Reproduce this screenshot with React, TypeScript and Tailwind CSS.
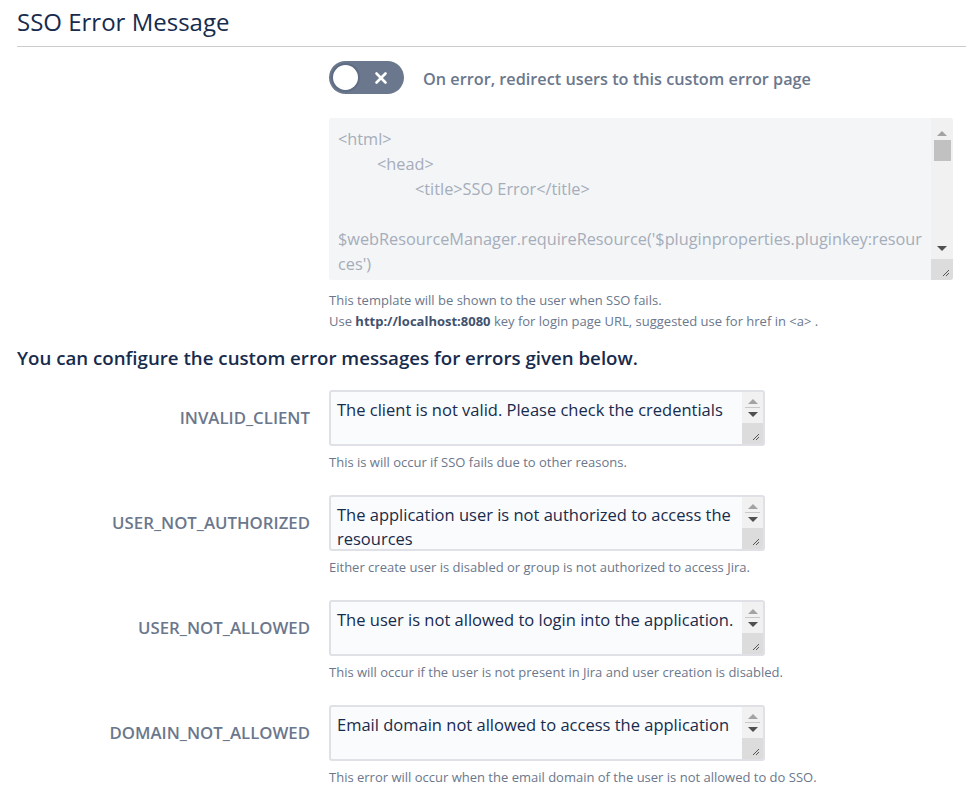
import { X } from "lucide-react";

const ROWS = [
  { key: "INVALID_CLIENT", value: "The client is not valid. Please check the credentials", help: "This is will occur if SSO fails due to other reasons." },
  { key: "USER_NOT_AUTHORIZED", value: "The application user is not authorized to access the resources", help: "Either create user is disabled or group is not authorized to access Jira." },
  { key: "USER_NOT_ALLOWED", value: "The user is not allowed to login into the application.", help: "This will occur if the user is not present in Jira and user creation is disabled." },
  { key: "DOMAIN_NOT_ALLOWED", value: "Email domain not allowed to access the application", help: "This error will occur when the email domain of the user is not allowed to do SSO." },
];

const Grip = () => (
  <svg width="10" height="10" viewBox="0 0 10 10" className="absolute right-[3px] bottom-[3px]">
    <path d="M9 3 L3 9 M9 6 L6 9" stroke="#555" strokeWidth="1" />
  </svg>
);

const Up = () => <div className="w-0 h-0 border-x-[5px] border-x-transparent border-b-[5px] border-b-[#a3a3a3]" />;
const Down = () => <div className="w-0 h-0 border-x-[5px] border-x-transparent border-t-[5px] border-t-[#505050]" />;

const SmallBox = ({ value }: { value: string }) => (
  <div className="flex w-[436px] h-[56px] rounded-[3px] border-2 border-[#dfe1e6] bg-[#fafbfc] overflow-hidden">
    <div className="flex-1 pl-[6px] pr-[4px] pt-[6px] text-[16.5px] leading-[24px] text-[#172b4d] overflow-hidden">{value}</div>
    <div className="w-[21px] bg-[#f1f1f1] flex flex-col">
      <div className="h-[15px] flex items-end justify-center pb-[3px]"><Up /></div>
      <div className="h-px mx-[3px] bg-[#c8c8c8]" />
      <div className="h-[15px] flex items-start justify-center pt-[4px]"><Down /></div>
      <div className="flex-1 relative bg-[#dcdcdc]"><Grip /></div>
    </div>
  </div>
);

export default function App() {
  return (
    <div className="pl-[17px] pb-6 bg-white" style={{ fontFamily: "'Open Sans', 'Noto Sans', sans-serif" }}>
      <h1 className="pt-[5px] pb-[8px] text-[24px] leading-[33px] font-medium text-[#172b4d] border-b border-[#ccc]">SSO Error Message</h1>

      <div className="pl-[312px] pr-[13px]">
        <div className="mt-[14px] flex items-center gap-[19px]">
          <div className="w-[75px] h-[33px] rounded-full bg-[#6b778c] flex items-center pl-[2px] pr-[14px] justify-between">
            <div className="w-[29px] h-[29px] rounded-full bg-white border-2 border-[#5e6c84]" />
            <X size={18} strokeWidth={3.5} color="#fff" />
          </div>
          <span className="pt-[4px] text-[16.25px] font-semibold text-[#6b778c]">On error, redirect users to this custom error page</span>
        </div>

        <div className="mt-[24px] flex h-[162px] rounded-[3px] bg-[#f4f5f7] overflow-hidden">
          <div className="flex-1 pl-[9px] pr-[6px] pt-[9px] text-[16.3px] leading-[25px] text-[#a5adba] whitespace-nowrap overflow-hidden">
            <div>&lt;html&gt;</div>
            <div className="pl-[39px]">&lt;head&gt;</div>
            <div className="pl-[77px]">&lt;title&gt;SSO Error&lt;/title&gt;</div>
            <div>&nbsp;</div>
            <div>$webResourceManager.requireResource('$pluginproperties.pluginkey:resour</div>
            <div>ces')</div>
          </div>
          <div className="w-[22px] bg-[#f1f1f1] flex flex-col items-center">
            <div className="h-[22px] flex items-end pb-[4px]"><Up /></div>
            <div className="w-[17px] h-[21px] bg-[#c1c1c1]" />
            <div className="flex-1 flex items-end pb-[8px]"><Down /></div>
            <div className="w-full h-[21px] relative bg-[#dcdcdc]"><Grip /></div>
          </div>
        </div>

        <div className="mt-[10px] text-[13px] leading-[21px] text-[#6b778c]">
          <div>This template will be shown to the user when SSO fails.</div>
          <div>Use <b className="text-[#42526e]">http://localhost:8080</b> key for login page URL, suggested use for href in &lt;a&gt; .</div>
        </div>
      </div>

      <h2 className="mt-[14px] text-[18.7px] leading-[24px] font-semibold text-[#172b4d]">You can configure the custom error messages for errors given below.</h2>

      <div className="mt-[20px] flex flex-col gap-[24px]">
        {ROWS.map((r) => (
          <div key={r.key} className="flex gap-[19px]">
            <div className="w-[293px] pt-[16px] text-right text-[16.8px] leading-[24px] font-semibold text-[#6b778c]">{r.key}</div>
            <div>
              <SmallBox value={r.value} />
              <div className="mt-[8px] text-[13px] leading-[17px] text-[#6b778c]">{r.help}</div>
            </div>
          </div>
        ))}
      </div>
    </div>
  );
}
